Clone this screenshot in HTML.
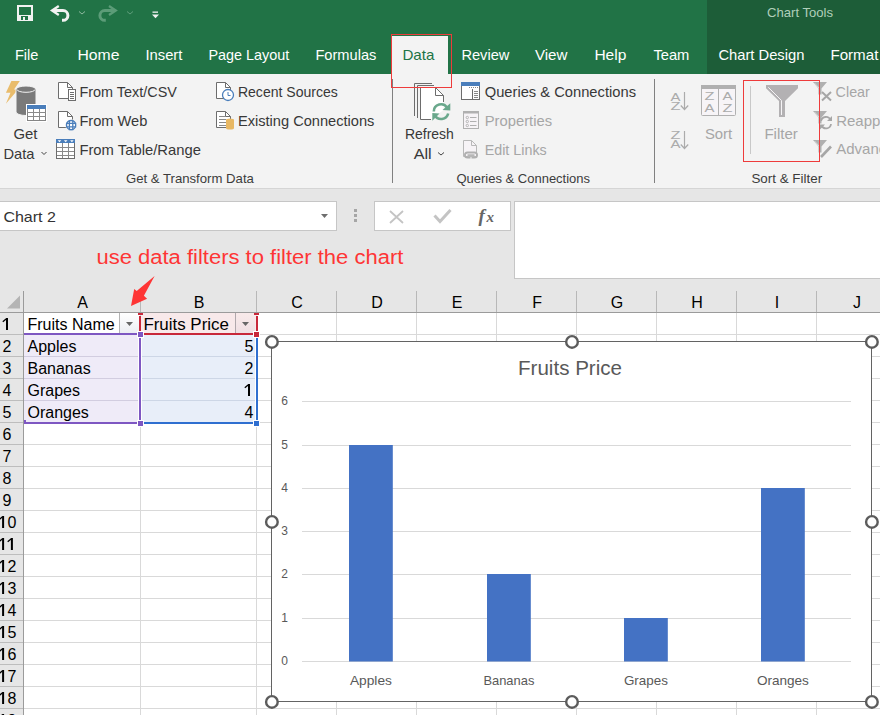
<!DOCTYPE html>
<html><head><meta charset="utf-8"><title>Excel</title>
<style>html,body{margin:0;padding:0;width:880px;height:715px;overflow:hidden;background:#e6e6e6}
svg{display:block;font-family:"Liberation Sans",sans-serif}</style></head>
<body><svg width="880" height="715" viewBox="0 0 880 715">
<rect x="0" y="0" width="880" height="74" fill="#217346"/>
<rect x="707" y="0" width="173" height="74" fill="#1d5d38"/>
<text x="800" y="17" font-size="13" fill="#b0cfba" textLength="66.0" lengthAdjust="spacingAndGlyphs" text-anchor="middle">Chart Tools</text>
<path d="M17 5h16v16h-16z" fill="#f2f2f2"/>
<path d="M19 7h12v8h-12z" fill="#217346"/>
<path d="M21 16h7v4h-7z" fill="#217346"/>
<path d="M23 17h2v3h-2z" fill="#f2f2f2"/>
<path d="M53 10.5 H63 A4.9 4.9 0 0 1 63 20.3 H62" fill="none" stroke="#f2f2f2" stroke-width="3"/>
<path d="M58.8 6 L52 10.5 L58.8 15" fill="none" stroke="#f2f2f2" stroke-width="2.3"/>
<path d="M79 11.5 l3 2.5 l3 -2.5" fill="none" stroke="#8fb9a0" stroke-width="1"/>
<g transform="translate(167.8 0) scale(-1 1)"><path d="M53 10.5 H63 A4.9 4.9 0 0 1 63 20.3 H62" fill="none" stroke="#5c9c78" stroke-width="3"/><path d="M58.8 6 L52 10.5 L58.8 15" fill="none" stroke="#5c9c78" stroke-width="2.3"/></g>
<path d="M127 11.5 l3 2.5 l3 -2.5" fill="none" stroke="#5f9e7b" stroke-width="1"/>
<rect x="152.5" y="11.5" width="5.5" height="1.3" fill="#f2f2f2"/>
<path d="M152 14.5 h7 l-3.5 3.7z" fill="#f2f2f2"/>
<text x="14.9" y="60" font-size="15" fill="#ffffff" textLength="23.5" lengthAdjust="spacingAndGlyphs">File</text>
<text x="77.4" y="60" font-size="15" fill="#ffffff" textLength="42.0" lengthAdjust="spacingAndGlyphs">Home</text>
<text x="145.4" y="60" font-size="15" fill="#ffffff" textLength="37.0" lengthAdjust="spacingAndGlyphs">Insert</text>
<text x="208.4" y="60" font-size="15" fill="#ffffff" textLength="81.0" lengthAdjust="spacingAndGlyphs">Page Layout</text>
<text x="315.4" y="60" font-size="15" fill="#ffffff" textLength="61.0" lengthAdjust="spacingAndGlyphs">Formulas</text>
<text x="461.4" y="60" font-size="15" fill="#ffffff" textLength="48.0" lengthAdjust="spacingAndGlyphs">Review</text>
<text x="534.9" y="60" font-size="15" fill="#ffffff" textLength="32.5" lengthAdjust="spacingAndGlyphs">View</text>
<text x="594.4" y="60" font-size="15" fill="#ffffff" textLength="32.0" lengthAdjust="spacingAndGlyphs">Help</text>
<text x="653.4" y="60" font-size="15" fill="#ffffff" textLength="36.0" lengthAdjust="spacingAndGlyphs">Team</text>
<text x="718.4" y="60" font-size="15" fill="#ffffff" textLength="86.0" lengthAdjust="spacingAndGlyphs">Chart Design</text>
<text x="830.4" y="60" font-size="15" fill="#ffffff" textLength="48.0" lengthAdjust="spacingAndGlyphs">Format</text>
<rect x="392" y="36" width="56" height="38" fill="#f3f3f3"/>
<text x="402.4" y="60" font-size="15" fill="#217346" textLength="32.0" lengthAdjust="spacingAndGlyphs">Data</text>
<rect x="0" y="74" width="880" height="114" fill="#f3f3f3"/>
<rect x="0" y="188" width="880" height="1" fill="#d5d5d5"/>
<rect x="0" y="189" width="880" height="526" fill="#e6e6e6"/>
<path d="M11.4 80.9 L19.8 80.9 L14 89.6 L18 89.6 L5.9 103.7 L10.5 92.8 L5.9 92.8 Z" fill="#e9bc6c"/>
<path d="M16 89.5 a10 3.5 0 0 1 20 0 V112 a10 3.5 0 0 1 -20 0 Z" fill="#7a7a7a" stroke="#f3f3f3" stroke-width="1"/>
<path d="M17 89.5 a9 2.8 0 0 0 18 0" fill="none" stroke="#f3f3f3" stroke-width="1"/>
<rect x="26" y="104" width="21" height="18" fill="#ffffff"/>
<rect x="27.5" y="105.5" width="18" height="15" fill="#ffffff" stroke="#858585" stroke-width="1"/>
<rect x="27" y="105" width="19" height="4" fill="#4a7ebb"/>
<line x1="33.5" y1="109" x2="33.5" y2="120" stroke="#8a8a8a" stroke-width="1"/>
<line x1="39.5" y1="109" x2="39.5" y2="120" stroke="#8a8a8a" stroke-width="1"/>
<line x1="27" y1="112.5" x2="46" y2="112.5" stroke="#8a8a8a" stroke-width="1"/>
<line x1="27" y1="116.5" x2="46" y2="116.5" stroke="#8a8a8a" stroke-width="1"/>
<text x="13.4" y="139" font-size="15" fill="#383838" textLength="24.0" lengthAdjust="spacingAndGlyphs">Get</text>
<text x="3.4" y="159" font-size="15" fill="#383838" textLength="31.0" lengthAdjust="spacingAndGlyphs">Data</text>
<path d="M41.5 152 l2.5 2.5 l2.5 -2.5" fill="none" stroke="#444" stroke-width="1"/>
<text x="79.4" y="96.5" font-size="15" fill="#383838" textLength="97.5" lengthAdjust="spacingAndGlyphs">From Text/CSV</text>
<text x="79.4" y="125.5" font-size="15" fill="#383838" textLength="68.0" lengthAdjust="spacingAndGlyphs">From Web</text>
<text x="79.4" y="154.5" font-size="15" fill="#383838" textLength="121.5" lengthAdjust="spacingAndGlyphs">From Table/Range</text>
<text x="237.9" y="96.5" font-size="15" fill="#383838" textLength="100.0" lengthAdjust="spacingAndGlyphs">Recent Sources</text>
<text x="237.9" y="125.5" font-size="15" fill="#383838" textLength="136.5" lengthAdjust="spacingAndGlyphs">Existing Connections</text>
<path d="M58.5 82.5 h9 l5 5 V98.5 H58.5 z" fill="#fff" stroke="#6d6d6d" stroke-width="1"/>
<path d="M67.5 82.5 v5 h5" fill="none" stroke="#6d6d6d" stroke-width="1"/>
<rect x="68.5" y="89.5" width="7" height="11" fill="#fff" stroke="#6d6d6d" stroke-width="1"/>
<line x1="70" y1="92.5" x2="74" y2="92.5" stroke="#6d6d6d" stroke-width="1"/>
<line x1="70" y1="94.5" x2="74" y2="94.5" stroke="#6d6d6d" stroke-width="1"/>
<line x1="70" y1="96.5" x2="74" y2="96.5" stroke="#6d6d6d" stroke-width="1"/>
<line x1="70" y1="98.5" x2="74" y2="98.5" stroke="#6d6d6d" stroke-width="1"/>
<path d="M58.5 111.5 h9 l5 5 V127.5 H58.5 z" fill="#fff" stroke="#6d6d6d" stroke-width="1"/>
<path d="M67.5 111.5 v5 h5" fill="none" stroke="#6d6d6d" stroke-width="1"/>
<circle cx="71.1" cy="125.1" r="5.9" fill="#f3f3f3"/>
<circle cx="71.1" cy="125.1" r="4.6" fill="#fff" stroke="#4a7ebb" stroke-width="1.4"/>
<path d="M69.4 120v10.2 M72.8 120v10.2 M66 123.4h10.2 M66 126.8h10.2" stroke="#4a7ebb" stroke-width="1.3"/>
<rect x="56.5" y="139.5" width="18" height="19" fill="#fff" stroke="#6d6d6d" stroke-width="1"/>
<rect x="56" y="139" width="19" height="4" fill="#4a7ebb"/>
<path d="M57.7 140.2 h3.6 l-1.8 2z" fill="#fff"/>
<path d="M63.900000000000006 140.2 h3.6 l-1.8 2z" fill="#fff"/>
<path d="M70.10000000000001 140.2 h3.6 l-1.8 2z" fill="#fff"/>
<line x1="62.5" y1="143" x2="62.5" y2="158" stroke="#8a8a8a" stroke-width="1"/>
<line x1="68.5" y1="143" x2="68.5" y2="158" stroke="#8a8a8a" stroke-width="1"/>
<line x1="57" y1="147.5" x2="74" y2="147.5" stroke="#8a8a8a" stroke-width="1"/>
<line x1="57" y1="151.5" x2="74" y2="151.5" stroke="#8a8a8a" stroke-width="1"/>
<line x1="57" y1="155.5" x2="74" y2="155.5" stroke="#8a8a8a" stroke-width="1"/>
<path d="M216.5 82.5 h9 l5 5 V98.5 H216.5 z" fill="#fff" stroke="#6d6d6d" stroke-width="1"/>
<path d="M225.5 82.5 v5 h5" fill="none" stroke="#6d6d6d" stroke-width="1"/>
<circle cx="228" cy="95" r="5.5" fill="#fff" stroke="#4a7ebb" stroke-width="1.3"/>
<path d="M228 92v3.5h2.5" fill="none" stroke="#4a7ebb" stroke-width="1"/>
<path d="M216.5 111.5 h9 l5 5 V127.5 H216.5 z" fill="#fff" stroke="#6d6d6d" stroke-width="1"/>
<path d="M225.5 111.5 v5 h5" fill="none" stroke="#6d6d6d" stroke-width="1"/>
<line x1="219" y1="116.5" x2="226" y2="116.5" stroke="#8a8a8a" stroke-width="1"/>
<line x1="219" y1="119.5" x2="226" y2="119.5" stroke="#8a8a8a" stroke-width="1"/>
<line x1="219" y1="122.5" x2="226" y2="122.5" stroke="#8a8a8a" stroke-width="1"/>
<line x1="219" y1="125.5" x2="226" y2="125.5" stroke="#8a8a8a" stroke-width="1"/>
<path d="M226 120 a4 1.5 0 0 1 8 0 v8 a4 1.5 0 0 1 -8 0z" fill="#e8b864"/>
<rect x="392" y="79" width="1" height="104" fill="#808080"/>
<path d="M414.5 116 V83.5 H432" fill="none" stroke="#6d6d6d" stroke-width="1"/>
<path d="M417.5 118 V85.5 H434" fill="none" stroke="#6d6d6d" stroke-width="1"/>
<path d="M420.5 119.5 V87.5 H435.5 L443.5 95.5 V110 L431 119.5 Z" fill="#fff"/>
<path d="M431 119.5 H420.5 V87.5 H435.5 L443.5 95.5 V102 M435.5 87.5 V95.5 H443.5" fill="none" stroke="#6d6d6d" stroke-width="1"/>
<path d="M433.8 111.5 A7.2 7.2 0 0 1 447.2 107.9 M448.2 113.5 A7.2 7.2 0 0 1 434.8 115.1" fill="none" stroke="#6aa88c" stroke-width="2.6"/>
<path d="M442.5 110 L450.3 103.3 L450.3 110.5 Z M432.3 113 L439.5 113.5 L432.3 120.7 Z" fill="#6aa88c"/>
<text x="404.9" y="138.5" font-size="15" fill="#383838" textLength="49.0" lengthAdjust="spacingAndGlyphs">Refresh</text>
<text x="413.7" y="158.5" font-size="15" fill="#383838" textLength="18.0" lengthAdjust="spacingAndGlyphs">All</text>
<path d="M438 152.5 l3 2.5 l3 -2.5" fill="none" stroke="#444" stroke-width="1"/>
<rect x="461.5" y="82.5" width="18" height="17" fill="#fff" stroke="#6d6d6d" stroke-width="1"/>
<rect x="461" y="82" width="19" height="4" fill="#4a7ebb"/>
<line x1="472.5" y1="89" x2="472.5" y2="99" stroke="#6d6d6d" stroke-width="1"/>
<rect x="469" y="87" width="1" height="1" fill="#8a8a8a"/>
<rect x="471" y="87" width="1" height="1" fill="#8a8a8a"/>
<rect x="473" y="87" width="1" height="1" fill="#8a8a8a"/>
<rect x="475" y="87" width="1" height="1" fill="#8a8a8a"/>
<rect x="477" y="87" width="1" height="1" fill="#8a8a8a"/>
<line x1="474" y1="91.5" x2="478" y2="91.5" stroke="#8a8a8a" stroke-width="1"/>
<line x1="474" y1="93.5" x2="478" y2="93.5" stroke="#8a8a8a" stroke-width="1"/>
<line x1="474" y1="95.5" x2="478" y2="95.5" stroke="#8a8a8a" stroke-width="1"/>
<line x1="474" y1="97.5" x2="478" y2="97.5" stroke="#8a8a8a" stroke-width="1"/>
<text x="484.7" y="97" font-size="15" fill="#383838" textLength="151.3" lengthAdjust="spacingAndGlyphs">Queries &amp; Connections</text>
<rect x="463.5" y="111.5" width="15" height="17" fill="#f6f3f6" stroke="#b0b0b0" stroke-width="1"/>
<rect x="463" y="111" width="16" height="2.5" fill="#b0b0b0"/>
<circle cx="467.3" cy="117.5" r="1.2" fill="none" stroke="#b0b0b0" stroke-width=".9"/>
<line x1="470" y1="117.5" x2="476.5" y2="117.5" stroke="#b0b0b0" stroke-width="1"/>
<circle cx="467.3" cy="121.5" r="1.2" fill="none" stroke="#b0b0b0" stroke-width=".9"/>
<line x1="470" y1="121.5" x2="476.5" y2="121.5" stroke="#b0b0b0" stroke-width="1"/>
<circle cx="467.3" cy="125.5" r="1.2" fill="none" stroke="#b0b0b0" stroke-width=".9"/>
<line x1="470" y1="125.5" x2="476.5" y2="125.5" stroke="#b0b0b0" stroke-width="1"/>
<text x="484.7" y="125.8" font-size="15" fill="#a6a6a6" textLength="67.4" lengthAdjust="spacingAndGlyphs">Properties</text>
<path d="M463.5 140.5 h8 l5 5 V156.5 H463.5 z" fill="#f6f3f6" stroke="#b8b8b8" stroke-width="1"/>
<path d="M471.5 140.5 v5 h5" fill="none" stroke="#b8b8b8" stroke-width="1"/>
<path d="M471 152.5 h-3.5 a2.6 2.6 0 0 0 0 5.2 h3 M471 152.5 h3.5 a2.6 2.6 0 0 1 0 5.2 h-3" fill="none" stroke="#b0b0b0" stroke-width="1.8"/>
<path d="M467.5 155.1 h7" stroke="#b0b0b0" stroke-width="1.6"/>
<text x="484.7" y="154.9" font-size="15" fill="#a6a6a6" textLength="62.0" lengthAdjust="spacingAndGlyphs">Edit Links</text>
<text x="125.9" y="182.5" font-size="13" fill="#3c3c3c" textLength="128.0" lengthAdjust="spacingAndGlyphs">Get &amp; Transform Data</text>
<text x="456.4" y="182.5" font-size="13" fill="#3c3c3c" textLength="133.7" lengthAdjust="spacingAndGlyphs">Queries &amp; Connections</text>
<text x="751.4" y="182.5" font-size="13" fill="#3c3c3c" textLength="70.7" lengthAdjust="spacingAndGlyphs">Sort &amp; Filter</text>
<rect x="654" y="79" width="1" height="104" fill="#808080"/>
<text x="670.4" y="101" font-size="11" fill="#ababab" textLength="10.0" lengthAdjust="spacingAndGlyphs">A</text>
<text x="670.4" y="110" font-size="11" fill="#ababab" textLength="10.0" lengthAdjust="spacingAndGlyphs">Z</text>
<path d="M684.5 92v17.5 M680.8 105.5l3.7 4l3.7-4" fill="none" stroke="#ababab" stroke-width="1.2"/>
<text x="670.4" y="139" font-size="11" fill="#ababab" textLength="10.0" lengthAdjust="spacingAndGlyphs">Z</text>
<text x="670.4" y="148" font-size="11" fill="#ababab" textLength="10.0" lengthAdjust="spacingAndGlyphs">A</text>
<path d="M684.5 131v17.5 M680.8 144.5l3.7 4l3.7-4" fill="none" stroke="#ababab" stroke-width="1.2"/>
<rect x="701.5" y="85.5" width="34" height="30" fill="#f7f4f7" stroke="#b0b0b0" stroke-width="1" rx="1"/>
<rect x="701" y="85" width="35" height="4" fill="#b0b0b0"/>
<line x1="718.5" y1="89" x2="718.5" y2="115" stroke="#b0b0b0" stroke-width="1"/>
<text x="704.4" y="100" font-size="11" fill="#ababab" textLength="10.0" lengthAdjust="spacingAndGlyphs">Z</text>
<text x="704.4" y="112" font-size="11" fill="#ababab" textLength="10.0" lengthAdjust="spacingAndGlyphs">A</text>
<text x="722.4" y="100" font-size="11" fill="#ababab" textLength="10.0" lengthAdjust="spacingAndGlyphs">A</text>
<text x="722.4" y="112" font-size="11" fill="#ababab" textLength="10.0" lengthAdjust="spacingAndGlyphs">Z</text>
<text x="704.9" y="138.8" font-size="15" fill="#a6a6a6" textLength="27.3" lengthAdjust="spacingAndGlyphs">Sort</text>
<rect x="750" y="86" width="1" height="68" fill="#c8c8c8"/>
<path d="M766 85 H798 V88.2 L785 101 V117 H779 V101 L766 88.2 Z" fill="#b3b1b3"/>
<path d="M768.3 87.3 L781.5 100.5 V115" fill="none" stroke="#f6f4f6" stroke-width="1"/>
<text x="764.4" y="138.8" font-size="15" fill="#a6a6a6" textLength="33.5" lengthAdjust="spacingAndGlyphs">Filter</text>
<path d="M813 82 h14 l-5.5 6.5 v6 h-3 v-6 z" fill="#b0b0b0"/>
<path d="M814.5 83 l5 5.5" stroke="#e6e6e6" stroke-width=".8"/>
<path d="M822 92 l9 8.5 M831 92 l-9 8.5" stroke="#a6a6a6" stroke-width="2"/>
<text x="835.6" y="96.8" font-size="15" fill="#a6a6a6" textLength="34.3" lengthAdjust="spacingAndGlyphs">Clear</text>
<path d="M813 111 h14 l-5.5 6.5 v6 h-3 v-6 z" fill="#b0b0b0"/>
<path d="M814.5 112 l5 5.5" stroke="#e6e6e6" stroke-width=".8"/>
<path d="M821 121 a5 5 0 0 1 9.5 -1 M831 124 a5 5 0 0 1 -9.5 1.5" fill="none" stroke="#a6a6a6" stroke-width="1.8"/>
<path d="M832 116 v5 h-5z M820 129.5 v-5 h5z" fill="#a6a6a6"/>
<text x="836.2" y="125.5" font-size="15" fill="#a6a6a6">Reapply</text>
<path d="M813 140 h14 l-5.5 6.5 v6 h-3 v-6 z" fill="#b0b0b0"/>
<path d="M814.5 141 l5 5.5" stroke="#e6e6e6" stroke-width=".8"/>
<path d="M821 157 l10 -10.5" stroke="#a6a6a6" stroke-width="2.6"/>
<text x="836.2" y="154.3" font-size="15" fill="#a6a6a6">Advanced</text>
<rect x="743.5" y="80.5" width="76" height="81" fill="none" stroke="#ee3b3b" stroke-width="1"/>
<rect x="391.5" y="34.5" width="60" height="53" fill="none" stroke="#ee3b3b" stroke-width="1"/>
<rect x="-1" y="201.5" width="337.5" height="29" fill="#ffffff" stroke="#c6c6c6" stroke-width="1"/>
<text x="3.4" y="222" font-size="15" fill="#333333" textLength="52.5" lengthAdjust="spacingAndGlyphs">Chart 2</text>
<path d="M321 214 h7 l-3.5 4z" fill="#6e6e6e"/>
<rect x="354" y="209" width="3" height="3" fill="#a6a6a6"/>
<rect x="354" y="214" width="3" height="3" fill="#a6a6a6"/>
<rect x="354" y="219" width="3" height="3" fill="#a6a6a6"/>
<rect x="374.5" y="201.5" width="136" height="29" fill="#ffffff" stroke="#c6c6c6" stroke-width="1"/>
<path d="M390 211 l13 12 M403 211 l-13 12" stroke="#c4c4c4" stroke-width="1.8"/>
<path d="M434.5 215.5 l5.5 6 l10.5 -11.5" fill="none" stroke="#c4c4c4" stroke-width="3"/>
<text x="478.5" y="221.5" font-size="19" fill="#666666" font-family="Liberation Serif" font-weight="bold" font-style="italic">f</text>
<text x="486.5" y="221.5" font-size="15" fill="#666666" font-family="Liberation Serif" font-weight="bold" font-style="italic">x</text>
<rect x="514.5" y="201.5" width="380" height="77" fill="#ffffff" stroke="#c6c6c6" stroke-width="1"/>
<text x="96.4" y="264" font-size="20" fill="#fe3535" textLength="307.0" lengthAdjust="spacingAndGlyphs">use data filters to filter the chart</text>
<rect x="24" y="313" width="856" height="402" fill="#ffffff"/>
<rect x="24" y="334" width="856" height="1" fill="#d9d9d9"/>
<rect x="24" y="356" width="856" height="1" fill="#d9d9d9"/>
<rect x="24" y="378" width="856" height="1" fill="#d9d9d9"/>
<rect x="24" y="400" width="856" height="1" fill="#d9d9d9"/>
<rect x="24" y="422" width="856" height="1" fill="#d9d9d9"/>
<rect x="24" y="444" width="856" height="1" fill="#d9d9d9"/>
<rect x="24" y="466" width="856" height="1" fill="#d9d9d9"/>
<rect x="24" y="488" width="856" height="1" fill="#d9d9d9"/>
<rect x="24" y="510" width="856" height="1" fill="#d9d9d9"/>
<rect x="24" y="532" width="856" height="1" fill="#d9d9d9"/>
<rect x="24" y="554" width="856" height="1" fill="#d9d9d9"/>
<rect x="24" y="576" width="856" height="1" fill="#d9d9d9"/>
<rect x="24" y="598" width="856" height="1" fill="#d9d9d9"/>
<rect x="24" y="620" width="856" height="1" fill="#d9d9d9"/>
<rect x="24" y="642" width="856" height="1" fill="#d9d9d9"/>
<rect x="24" y="664" width="856" height="1" fill="#d9d9d9"/>
<rect x="24" y="686" width="856" height="1" fill="#d9d9d9"/>
<rect x="24" y="708" width="856" height="1" fill="#d9d9d9"/>
<rect x="24" y="730" width="856" height="1" fill="#d9d9d9"/>
<rect x="140" y="313" width="1" height="402" fill="#d9d9d9"/>
<rect x="256" y="313" width="1" height="402" fill="#d9d9d9"/>
<rect x="336" y="313" width="1" height="402" fill="#d9d9d9"/>
<rect x="416" y="313" width="1" height="402" fill="#d9d9d9"/>
<rect x="496" y="313" width="1" height="402" fill="#d9d9d9"/>
<rect x="576" y="313" width="1" height="402" fill="#d9d9d9"/>
<rect x="656" y="313" width="1" height="402" fill="#d9d9d9"/>
<rect x="736" y="313" width="1" height="402" fill="#d9d9d9"/>
<rect x="816" y="313" width="1" height="402" fill="#d9d9d9"/>
<rect x="896" y="313" width="1" height="402" fill="#d9d9d9"/>
<rect x="140" y="291" width="1" height="21" fill="#b8b8b8"/>
<text x="82.6" y="308" font-size="16" fill="#000000" text-anchor="middle">A</text>
<rect x="256" y="291" width="1" height="21" fill="#b8b8b8"/>
<text x="199.1" y="308" font-size="16" fill="#000000" text-anchor="middle">B</text>
<rect x="336" y="291" width="1" height="21" fill="#b8b8b8"/>
<text x="297.1" y="308" font-size="16" fill="#000000" text-anchor="middle">C</text>
<rect x="416" y="291" width="1" height="21" fill="#b8b8b8"/>
<text x="377.1" y="308" font-size="16" fill="#000000" text-anchor="middle">D</text>
<rect x="496" y="291" width="1" height="21" fill="#b8b8b8"/>
<text x="457.1" y="308" font-size="16" fill="#000000" text-anchor="middle">E</text>
<rect x="576" y="291" width="1" height="21" fill="#b8b8b8"/>
<text x="537.1" y="308" font-size="16" fill="#000000" text-anchor="middle">F</text>
<rect x="656" y="291" width="1" height="21" fill="#b8b8b8"/>
<text x="617.1" y="308" font-size="16" fill="#000000" text-anchor="middle">G</text>
<rect x="736" y="291" width="1" height="21" fill="#b8b8b8"/>
<text x="697.1" y="308" font-size="16" fill="#000000" text-anchor="middle">H</text>
<rect x="816" y="291" width="1" height="21" fill="#b8b8b8"/>
<text x="777.1" y="308" font-size="16" fill="#000000" text-anchor="middle">I</text>
<rect x="896" y="291" width="1" height="21" fill="#b8b8b8"/>
<text x="857.1" y="308" font-size="16" fill="#000000" text-anchor="middle">J</text>
<rect x="0" y="312" width="880" height="1" fill="#9b9b9b"/>
<rect x="23" y="291" width="1" height="424" fill="#9b9b9b"/>
<path d="M7 308.5 L20 295.5 V308.5 Z" fill="#b4b4b4"/>
<rect x="6" y="318" width="2" height="12" fill="#000"/>
<path d="M2.8 321.7 L6.4 318.7" stroke="#000" stroke-width="1.3"/>
<rect x="0" y="334" width="23" height="1" fill="#bdbdbd"/>
<text x="7" y="352" font-size="16" fill="#000" text-anchor="middle">2</text>
<rect x="0" y="356" width="23" height="1" fill="#bdbdbd"/>
<text x="7" y="374" font-size="16" fill="#000" text-anchor="middle">3</text>
<rect x="0" y="378" width="23" height="1" fill="#bdbdbd"/>
<text x="7" y="396" font-size="16" fill="#000" text-anchor="middle">4</text>
<rect x="0" y="400" width="23" height="1" fill="#bdbdbd"/>
<text x="7" y="418" font-size="16" fill="#000" text-anchor="middle">5</text>
<rect x="0" y="422" width="23" height="1" fill="#bdbdbd"/>
<text x="7" y="440" font-size="16" fill="#000" text-anchor="middle">6</text>
<rect x="0" y="444" width="23" height="1" fill="#bdbdbd"/>
<text x="7" y="462" font-size="16" fill="#000" text-anchor="middle">7</text>
<rect x="0" y="466" width="23" height="1" fill="#bdbdbd"/>
<text x="7" y="484" font-size="16" fill="#000" text-anchor="middle">8</text>
<rect x="0" y="488" width="23" height="1" fill="#bdbdbd"/>
<text x="7" y="506" font-size="16" fill="#000" text-anchor="middle">9</text>
<rect x="0" y="510" width="23" height="1" fill="#bdbdbd"/>
<rect x="2.1" y="516" width="2" height="12" fill="#000"/>
<path d="M-1.1 519.7 L2.5 516.7" stroke="#000" stroke-width="1.3"/>
<text x="11.9" y="528" font-size="16" fill="#000" text-anchor="middle">0</text>
<rect x="0" y="532" width="23" height="1" fill="#bdbdbd"/>
<rect x="2.1" y="538" width="2" height="12" fill="#000"/>
<path d="M-1.1 541.7 L2.5 538.7" stroke="#000" stroke-width="1.3"/>
<rect x="10.9" y="538" width="2" height="12" fill="#000"/>
<path d="M7.7 541.7 L11.3 538.7" stroke="#000" stroke-width="1.3"/>
<rect x="0" y="554" width="23" height="1" fill="#bdbdbd"/>
<rect x="2.1" y="560" width="2" height="12" fill="#000"/>
<path d="M-1.1 563.7 L2.5 560.7" stroke="#000" stroke-width="1.3"/>
<text x="11.9" y="572" font-size="16" fill="#000" text-anchor="middle">2</text>
<rect x="0" y="576" width="23" height="1" fill="#bdbdbd"/>
<rect x="2.1" y="582" width="2" height="12" fill="#000"/>
<path d="M-1.1 585.7 L2.5 582.7" stroke="#000" stroke-width="1.3"/>
<text x="11.9" y="594" font-size="16" fill="#000" text-anchor="middle">3</text>
<rect x="0" y="598" width="23" height="1" fill="#bdbdbd"/>
<rect x="2.1" y="604" width="2" height="12" fill="#000"/>
<path d="M-1.1 607.7 L2.5 604.7" stroke="#000" stroke-width="1.3"/>
<text x="11.9" y="616" font-size="16" fill="#000" text-anchor="middle">4</text>
<rect x="0" y="620" width="23" height="1" fill="#bdbdbd"/>
<rect x="2.1" y="626" width="2" height="12" fill="#000"/>
<path d="M-1.1 629.7 L2.5 626.7" stroke="#000" stroke-width="1.3"/>
<text x="11.9" y="638" font-size="16" fill="#000" text-anchor="middle">5</text>
<rect x="0" y="642" width="23" height="1" fill="#bdbdbd"/>
<rect x="2.1" y="648" width="2" height="12" fill="#000"/>
<path d="M-1.1 651.7 L2.5 648.7" stroke="#000" stroke-width="1.3"/>
<text x="11.9" y="660" font-size="16" fill="#000" text-anchor="middle">6</text>
<rect x="0" y="664" width="23" height="1" fill="#bdbdbd"/>
<rect x="2.1" y="670" width="2" height="12" fill="#000"/>
<path d="M-1.1 673.7 L2.5 670.7" stroke="#000" stroke-width="1.3"/>
<text x="11.9" y="682" font-size="16" fill="#000" text-anchor="middle">7</text>
<rect x="0" y="686" width="23" height="1" fill="#bdbdbd"/>
<rect x="2.1" y="692" width="2" height="12" fill="#000"/>
<path d="M-1.1 695.7 L2.5 692.7" stroke="#000" stroke-width="1.3"/>
<text x="11.9" y="704" font-size="16" fill="#000" text-anchor="middle">8</text>
<rect x="0" y="708" width="23" height="1" fill="#bdbdbd"/>
<rect x="2.1" y="714" width="2" height="12" fill="#000"/>
<path d="M-1.1 717.7 L2.5 714.7" stroke="#000" stroke-width="1.3"/>
<text x="11.9" y="726" font-size="16" fill="#000" text-anchor="middle">9</text>
<rect x="0" y="730" width="23" height="1" fill="#bdbdbd"/>
<rect x="24" y="335" width="116" height="88" fill="#ffffff"/>
<rect x="141" y="335" width="116" height="88" fill="#ffffff"/>
<rect x="24" y="335" width="114" height="87" fill="#efebf8"/>
<rect x="142" y="335" width="113" height="87" fill="#e8eef9"/>
<rect x="141" y="313" width="116" height="21" fill="#f8e9ea"/>
<rect x="24" y="356" width="114" height="1" fill="#d2cde0"/>
<rect x="142" y="356" width="113" height="1" fill="#cdd6e6"/>
<rect x="24" y="378" width="114" height="1" fill="#d2cde0"/>
<rect x="142" y="378" width="113" height="1" fill="#cdd6e6"/>
<rect x="24" y="400" width="114" height="1" fill="#d2cde0"/>
<rect x="142" y="400" width="113" height="1" fill="#cdd6e6"/>
<rect x="119" y="313" width="1" height="21" fill="#b4b4b4"/>
<defs><linearGradient id="fb" x1="0" y1="0" x2="0" y2="1"><stop offset="0" stop-color="#ffffff"/><stop offset="1" stop-color="#eceef3"/></linearGradient><linearGradient id="fbp" x1="0" y1="0" x2="0" y2="1"><stop offset="0" stop-color="#f8eaea"/><stop offset="1" stop-color="#efdfe3"/></linearGradient></defs>
<rect x="120" y="313" width="19" height="20" fill="url(#fb)"/>
<path d="M126 322 h7 l-3.5 4z" fill="#666"/>
<rect x="235" y="313" width="1" height="21" fill="#b0a8ac"/>
<rect x="236" y="314" width="19" height="19" fill="url(#fbp)"/>
<path d="M242 322 h7 l-3.5 4z" fill="#666"/>
<text x="27.5" y="330" font-size="16" fill="#000">Fruits Name</text>
<text x="143.4" y="330" font-size="16" fill="#000" textLength="85.5" lengthAdjust="spacingAndGlyphs">Fruits Price</text>
<text x="27.5" y="352" font-size="16" fill="#000">Apples</text>
<text x="249" y="352" font-size="16" fill="#000" text-anchor="middle">5</text>
<text x="27.5" y="374" font-size="16" fill="#000">Bananas</text>
<text x="249" y="374" font-size="16" fill="#000" text-anchor="middle">2</text>
<text x="27.5" y="396" font-size="16" fill="#000">Grapes</text>
<rect x="248" y="384" width="2" height="12" fill="#000"/>
<path d="M244.8 387.7 L248.4 384.7" stroke="#000" stroke-width="1.3"/>
<text x="27.5" y="418" font-size="16" fill="#000">Oranges</text>
<text x="249" y="418" font-size="16" fill="#000" text-anchor="middle">4</text>
<rect x="24" y="333" width="113" height="2" fill="#7e57c2"/>
<rect x="26" y="422" width="111" height="2" fill="#7e57c2"/>
<rect x="139" y="338" width="2" height="82" fill="#7e57c2"/>
<rect x="24" y="420" width="2" height="4" fill="#7e57c2"/>
<rect x="137" y="331" width="7" height="7" fill="#ffffff"/>
<rect x="138" y="332" width="5" height="5" fill="#7e57c2"/>
<rect x="137" y="420" width="7" height="7" fill="#ffffff"/>
<rect x="138" y="421" width="5" height="5" fill="#7e57c2"/>
<rect x="139" y="316" width="2" height="15" fill="#c8283a"/>
<rect x="138" y="313" width="5" height="2" fill="#c8283a"/>
<rect x="256" y="316" width="2" height="15" fill="#c8283a"/>
<rect x="254" y="313" width="5" height="2" fill="#c8283a"/>
<rect x="144" y="333" width="109" height="2" fill="#c8283a"/>
<rect x="253" y="331" width="7" height="7" fill="#ffffff"/>
<rect x="254" y="332" width="5" height="5" fill="#c8283a"/>
<rect x="256" y="338" width="2" height="82" fill="#2f6fd0"/>
<rect x="144" y="422" width="109" height="2" fill="#2f6fd0"/>
<rect x="253" y="420" width="7" height="7" fill="#ffffff"/>
<rect x="254" y="421" width="5" height="5" fill="#2f6fd0"/>
<path d="M154.6 276 L143.9 295.8 L147.1 298.7 L131 305.9 L134.2 288.9 L136.7 291.1 Z" fill="#fe3535"/>
<rect x="271.5" y="341.5" width="600" height="360" fill="#ffffff" stroke="#636363" stroke-width="1"/>
<text x="570" y="374.5" font-size="20" fill="#595959" textLength="104.0" lengthAdjust="spacingAndGlyphs" text-anchor="middle">Fruits Price</text>
<rect x="302" y="661" width="549" height="1" fill="#d9d9d9"/>
<text x="284.5" y="665.1" font-size="12" fill="#595959" text-anchor="middle">0</text>
<rect x="302" y="618" width="549" height="1" fill="#d9d9d9"/>
<text x="284.5" y="622.1" font-size="12" fill="#595959" text-anchor="middle">1</text>
<rect x="302" y="574" width="549" height="1" fill="#d9d9d9"/>
<text x="284.5" y="578.1" font-size="12" fill="#595959" text-anchor="middle">2</text>
<rect x="302" y="531" width="549" height="1" fill="#d9d9d9"/>
<text x="284.5" y="535.1" font-size="12" fill="#595959" text-anchor="middle">3</text>
<rect x="302" y="488" width="549" height="1" fill="#d9d9d9"/>
<text x="284.5" y="492.1" font-size="12" fill="#595959" text-anchor="middle">4</text>
<rect x="302" y="445" width="549" height="1" fill="#d9d9d9"/>
<text x="284.5" y="449.1" font-size="12" fill="#595959" text-anchor="middle">5</text>
<rect x="302" y="401" width="549" height="1" fill="#d9d9d9"/>
<text x="284.5" y="405.1" font-size="12" fill="#595959" text-anchor="middle">6</text>
<rect x="349" y="445" width="43.8" height="216.5" fill="#4472c4"/>
<text x="370.9" y="685" font-size="13" fill="#595959" textLength="42.0" lengthAdjust="spacingAndGlyphs" text-anchor="middle">Apples</text>
<rect x="487" y="574" width="43.8" height="87.5" fill="#4472c4"/>
<text x="508.9" y="685" font-size="13" fill="#595959" textLength="51.0" lengthAdjust="spacingAndGlyphs" text-anchor="middle">Bananas</text>
<rect x="624" y="618" width="43.8" height="43.5" fill="#4472c4"/>
<text x="645.9" y="685" font-size="13" fill="#595959" textLength="44.0" lengthAdjust="spacingAndGlyphs" text-anchor="middle">Grapes</text>
<rect x="761" y="488" width="43.8" height="173.5" fill="#4472c4"/>
<text x="782.9" y="685" font-size="13" fill="#595959" textLength="52.0" lengthAdjust="spacingAndGlyphs" text-anchor="middle">Oranges</text>
<circle cx="271.9" cy="341.9" r="5.8" fill="#ffffff" stroke="#5c5c5c" stroke-width="2.4"/>
<circle cx="572" cy="341.9" r="5.8" fill="#ffffff" stroke="#5c5c5c" stroke-width="2.4"/>
<circle cx="871.9" cy="341.9" r="5.8" fill="#ffffff" stroke="#5c5c5c" stroke-width="2.4"/>
<circle cx="271.9" cy="521.9" r="5.8" fill="#ffffff" stroke="#5c5c5c" stroke-width="2.4"/>
<circle cx="871.9" cy="521.9" r="5.8" fill="#ffffff" stroke="#5c5c5c" stroke-width="2.4"/>
<circle cx="271.9" cy="701.9" r="5.8" fill="#ffffff" stroke="#5c5c5c" stroke-width="2.4"/>
<circle cx="572" cy="701.9" r="5.8" fill="#ffffff" stroke="#5c5c5c" stroke-width="2.4"/>
<circle cx="871.9" cy="701.9" r="5.8" fill="#ffffff" stroke="#5c5c5c" stroke-width="2.4"/>
</svg></body></html>
